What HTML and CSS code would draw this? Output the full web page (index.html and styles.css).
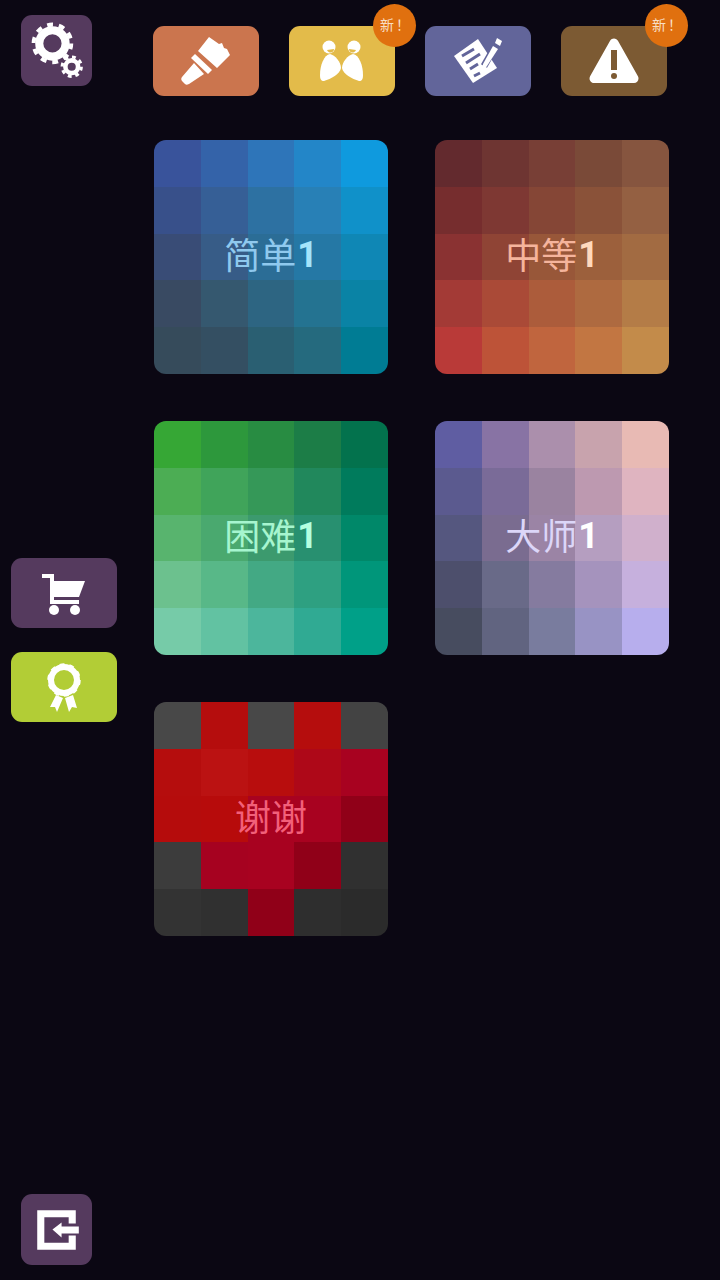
FILE: index.html
```html
<!DOCTYPE html>
<html lang="zh-CN">
<head>
  <meta charset="UTF-8">
  <meta name="viewport" content="width=device-width, initial-scale=1.0">
  <title>Levels</title>
  <link rel="stylesheet" href="styles.css">
</head>
<body>

  <div class="screen">

    <!-- Left column -->
    <div class="sidebar">
      <button class="btn btn-square btn-plum settings-btn">
        <svg viewBox="0 0 70 70" width="71" height="71">
          <circle class="line" cx="31" cy="28" r="13" stroke-width="8"/>
          <circle class="line" cx="31" cy="28" r="18.5" stroke-width="4" stroke-dasharray="5.81 5.81"/>
          <circle class="line" cx="50" cy="51" r="6.25" stroke-width="4.5"/>
          <circle class="line" cx="50" cy="51" r="9.5" stroke-width="3" stroke-dasharray="3.73 3.73"/>
        </svg>
      </button>

      <button class="btn btn-wide btn-plum cart-btn">
        <svg viewBox="0 0 106 70" width="106" height="70">
          <path class="solid" d="M31 16h12v7h31l-6 16H43v3h25v4H39V20h-8z"/>
          <circle class="solid" cx="43" cy="52" r="5"/>
          <circle class="solid" cx="64" cy="52" r="5"/>
        </svg>
      </button>

      <button class="btn btn-wide btn-lime award-btn">
        <svg viewBox="0 0 106 70" width="106" height="70">
          <circle class="line" cx="53" cy="28" r="13" stroke-width="6"/>
          <circle class="line" cx="53" cy="28" r="15.5" stroke-width="2.5" stroke-dasharray="4.87 4.87"/>
          <path class="solid" d="M45 43l7 3-6 14-2-5-5 0z"/>
          <path class="solid" d="M62 43l-8 3 4 14 3-5 5 1z"/>
        </svg>
      </button>

      <button class="btn btn-square btn-plum exit-btn">
        <svg viewBox="0 0 70 70" width="71" height="71">
          <path class="solid" d="M16 16h38v13h-7v-6H23v25h24v-7h7v14H16z"/>
          <path class="solid" d="M31 35l9-7v4h17v7H40v4z"/>
        </svg>
      </button>
    </div>

    <div class="main">

      <!-- Top buttons -->
      <div class="toolbar">
        <button class="btn btn-wide btn-orange">
          <svg viewBox="0 0 106 70" width="106" height="70">
            <path class="solid" d="M56 11l10 7 3-1 2 5 3 1 3 6-13 13-19-17z"/>
            <path class="solid" d="M42 28l17 16-4 4-17-16z"/>
            <path class="solid" d="M41 37l10 11-15 10c-2 1-3 1-4 0l-3-3c-1-1-1-3 0-4z"/>
          </svg>
        </button>

        <button class="btn btn-wide btn-yellow">
          <span class="badge">新！</span>
          <svg viewBox="0 0 106 70" width="106" height="70">
            <circle class="solid" cx="40" cy="21" r="6.5"/>
            <path class="mouth-yellow" d="M38 24l7-1c0 4-5 5-7 1z"/>
            <path class="solid" d="M41 28c5 1 11 8 11 14-1 6-10 11-17 13-3 0-4-2-4-6 0-10 4-20 10-21z"/>
            <g transform="matrix(-1 0 0 1 105 0)">
              <circle class="solid" cx="40" cy="21" r="6.5"/>
              <path class="mouth-yellow" d="M38 24l7-1c0 4-5 5-7 1z"/>
              <path class="solid" d="M41 28c5 1 11 8 11 14-1 6-10 11-17 13-3 0-4-2-4-6 0-10 4-20 10-21z"/>
            </g>
          </svg>
        </button>

        <button class="btn btn-wide btn-slate">
          <svg viewBox="0 0 106 70" width="106" height="70">
            <path class="solid" d="M53 13L29 30l19 27 24-15z"/>
            <path class="cut-slate" d="M37 30l12-7M41 37l14-9M45 43l8-5M49 50l6-3" stroke-width="3"/>
            <path class="cut-slate" d="M71 19L59 40" stroke-width="7"/>
            <path class="solid" d="M68 20l5 3-11 17-5 6 1-8z"/>
            <path class="solid" d="M70 17l2-5 5 3-2 5z"/>
          </svg>
        </button>

        <button class="btn btn-wide btn-brown">
          <span class="badge">新！</span>
          <svg viewBox="0 0 106 70" width="106" height="70">
            <path class="solid round-join" d="M53 17L33 52.5h40z"/>
            <rect class="mark-brown" x="50" y="24" width="6" height="20"/>
            <circle class="mark-brown" cx="53" cy="50" r="3"/>
          </svg>
        </button>
      </div>

      <!-- Levels, cells are filled in by script.js -->
      <div class="levels">
        <div class="tile" data-palette="blue">
          <div class="cells"></div>
          <div class="label label-blue">简单<b>1</b></div>
        </div>
        <div class="tile" data-palette="orange">
          <div class="cells"></div>
          <div class="label label-orange">中等<b>1</b></div>
        </div>
        <div class="tile" data-palette="green">
          <div class="cells"></div>
          <div class="label label-green">困难<b>1</b></div>
        </div>
        <div class="tile" data-palette="purple">
          <div class="cells"></div>
          <div class="label label-purple">大师<b>1</b></div>
        </div>
        <div class="tile" data-palette="red">
          <div class="cells"></div>
          <div class="label label-red">谢谢</div>
        </div>
      </div>
    </div>
  </div>

  <script src="script.js"></script>
</body>
</html>
```

FILE: styles.css
```css
body {
  margin: 0;
  padding: 0;
  background-color: #0b0713;
  font-family: "Noto Sans CJK SC", "Noto Sans", sans-serif;
}

.screen {
  display: flex;
  width: 720px;
  height: 1280px;
  overflow: hidden;
}

/* Buttons */
.btn {
  position: relative;
  display: block;
  flex: none;
  height: 70px;
  padding: 0;
  border: none;
  border-radius: 11px;
  cursor: pointer;
}

.btn svg {
  display: block;
}

.btn-square {
  width: 71px;
  height: 71px;
}

.btn-wide { width: 106px; }

.btn-plum { background-color: #553a5e; }
.btn-lime { background-color: #b2cd36; }
.btn-orange { background-color: #cb754e; }
.btn-yellow { background-color: #e3bb4a; }
.btn-slate { background-color: #62659a; }
.btn-brown { background-color: #7c5a33; }

/* Icon parts */
.solid { fill: #ffffff; }
.line { fill: none; stroke: #ffffff; }
.round-join { stroke: #ffffff; stroke-width: 9; stroke-linejoin: round; }
.mouth-yellow { fill: #e3bb4a; }
.mark-brown { fill: #7c5a33; }
.cut-slate { fill: none; stroke: #62659a; }

.badge {
  position: absolute;
  top: -22px;
  right: -21px;
  width: 43px;
  height: 43px;
  border-radius: 50%;
  background-color: #e0700f;
  color: #f8dfc6;
  font-size: 14px;
  letter-spacing: 2px;
  line-height: 42px;
  text-align: center;
  text-indent: 3px;
}

/* Left column */
.sidebar {
  display: flex;
  flex-direction: column;
  flex: none;
  width: 153px;
}

.settings-btn { margin: 15px 0 0 21px; }
.cart-btn { margin: 472px 0 0 11px; }
.award-btn { margin: 24px 0 0 11px; }
.exit-btn { margin: auto 0 15px 21px; }

/* Main column */
.main {
  padding-top: 26px;
}

.toolbar {
  display: flex;
  gap: 30px;
}

.levels {
  display: grid;
  grid-template-columns: 234px 234px;
  gap: 47px;
  margin: 44px 0 0 1px;
}

.tile {
  position: relative;
  width: 234px;
  height: 234px;
  border-radius: 12px;
  overflow: hidden;
}

.cells {
  display: grid;
  grid-template-columns: repeat(5, 1fr);
  grid-template-rows: repeat(5, 1fr);
  height: 100%;
}

.label {
  position: absolute;
  top: 0;
  left: 0;
  right: 0;
  bottom: 0;
  display: flex;
  align-items: center;
  justify-content: center;
  font-size: 36px;
  font-weight: 400;
  line-height: 1;
  padding-bottom: 8px;
  box-sizing: border-box;
}

.label b {
  margin: 4px 0 0 1px;
  font-family: Roboto, sans-serif;
  font-size: 36px;
  font-weight: 700;
}

.label-blue { color: #8fc9ee; }
.label-blue b { color: #a4e4fb; }
.label-orange { color: #f5b49c; }
.label-orange b { color: #ffd9bd; }
.label-green { color: #a6f5cf; }
.label-green b { color: #b5ffe0; }
.label-purple { color: #dcd6f8; }
.label-purple b { color: #ffffff; }
.label-red { color: #f2607a; }
```

FILE: script.js
```js
// Colores de cada casilla, fila por fila
const palettes = {
  blue: [
    '#39539b', '#3463a9', '#2e75b9', '#2386c8', '#0f9ade',
    '#38508a', '#365f96', '#2d71a2', '#2880b6', '#1091c9',
    '#394c76', '#375c87', '#2b6d96', '#2578a5', '#0f87b5',
    '#394a62', '#35586f', '#2d6582', '#247391', '#0a83a5',
    '#364b5b', '#344f62', '#2a5f72', '#256a7e', '#007c94'
  ],
  orange: [
    '#632a2e', '#6e3532', '#783f36', '#7a4a38', '#86553f',
    '#762d2e', '#7e3833', '#854636', '#8a5239', '#946042',
    '#8a3232', '#8f4435', '#985739', '#9c603c', '#a26b42',
    '#a33a36', '#aa4a37', '#ac5c3b', '#ae6a40', '#b47c47',
    '#b93a38', '#bd5338', '#c0653e', '#c27642', '#c38b4a'
  ],
  green: [
    '#36a735', '#2d983c', '#288c42', '#1c7d47', '#03724d',
    '#4cad54', '#40a45a', '#359858', '#21885c', '#007b5c',
    '#58b46e', '#4aa96f', '#3c9a6e', '#289070', '#008869',
    '#6cc18e', '#58b888', '#43a984', '#2ea081', '#00967a',
    '#76cba8', '#62c2a2', '#4cb69c', '#30aa93', '#00a088'
  ],
  purple: [
    '#5f5da2', '#8873a4', '#ab8fac', '#c8a3ad', '#e8bab4',
    '#5b5a8f', '#7a6b98', '#9a83a0', '#bd99b0', '#dfb4c0',
    '#55577f', '#7a6c90', '#9b84a5', '#b59ec0', '#d0b0cc',
    '#4d4f6c', '#696a88', '#857b9f', '#a593bd', '#c6b0dd',
    '#474c5f', '#616480', '#797c9e', '#9893c4', '#b7aeed'
  ],
  red: [
    '#484848', '#b50d0d', '#484848', '#b50d0d', '#434343',
    '#b50d0d', '#bb1212', '#b80d0d', '#ae0818', '#a80220',
    '#b50c0c', '#b70b0b', '#a80220', '#a80220', '#900018',
    '#3c3c3c', '#a60220', '#a80220', '#900018', '#303030',
    '#333333', '#303030', '#900018', '#2e2e2e', '#2b2b2b'
  ]
};

document.querySelectorAll('.tile').forEach(function(tile) {
  const cells = tile.querySelector('.cells');
  palettes[tile.dataset.palette].forEach(function(color) {
    const cell = document.createElement('span');
    cell.style.backgroundColor = color;
    cells.appendChild(cell);
  });
});
```
